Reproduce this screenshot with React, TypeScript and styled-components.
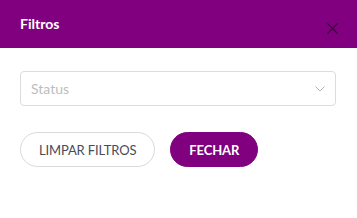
import styled, { createGlobalStyle } from 'styled-components';

const GlobalStyle = createGlobalStyle`
    body {
        margin: 0;
        background: #fff;
        font-family: Lato, "Open Sans", sans-serif;
    }
`;

const Modal = styled.div`
    width: 357px;
    height: 218px;
    background: #fff;
`;

const Header = styled.div`
    height: 48px;
    background: #800080;
    display: flex;
    align-items: flex-start;
    justify-content: space-between;
    padding: 0 19px 0 20px;
    box-sizing: border-box;
`;

const Titulo = styled.h5`
    margin: 15px 0 0;
    font-size: 14px;
    font-weight: 700;
    line-height: 17px;
    color: #fff;
`;

const BotonCerrar = styled.button`
    margin-top: 23px;
    padding: 0;
    border: none;
    background: none;
    opacity: 0.5;
    display: flex;
    cursor: pointer;
`;

const Body = styled.div`
    padding: 23px 21px 0 20px;
    display: flex;
    flex-direction: column;
    gap: 26px;
`;

const Select = styled.div`
    height: 35px;
    box-sizing: border-box;
    border: 1px solid #dcdcdc;
    border-radius: 4px;
    display: flex;
    align-items: center;
    justify-content: space-between;
    padding: 0 10px 0 10px;
`;

const Placeholder = styled.span`
    font-size: 14px;
    color: #bdbdbd;
`;

const Acciones = styled.div`
    display: flex;
    gap: 15px;
`;

const Boton = styled.button<{ $primario?: boolean }>`
    height: 35px;
    border-radius: 18px;
    padding: 0 18px;
    font-family: Lato, sans-serif;
    font-size: 13px;
    font-weight: ${(p) => (p.$primario ? 700 : 400)};
    color: ${(p) => (p.$primario ? '#fff' : '#4a4a5a')};
    background: ${(p) => (p.$primario ? '#800080' : '#fff')};
    border: 1px solid ${(p) => (p.$primario ? '#800080' : '#d9d9d9')};
    letter-spacing: -0.15px;
    cursor: pointer;
`;

export default function App() {
    return (
        <>
            <GlobalStyle />
            <Modal>
                <Header>
                    <Titulo>Filtros</Titulo>
                    <BotonCerrar aria-label="Fechar">
                        <svg width="11" height="11" viewBox="0 0 11 11">
                            <path d="M0.5 0.5 L10.5 10.5 M10.5 0.5 L0.5 10.5" stroke="#000" strokeWidth="1.2" fill="none" />
                        </svg>
                    </BotonCerrar>
                </Header>
                <Body>
                    <Select>
                        <Placeholder>Status</Placeholder>
                        <svg width="10" height="6" viewBox="0 0 10 6">
                            <path d="M0.5 0.5 L5 5 L9.5 0.5" stroke="#b5b5b5" strokeWidth="1" fill="none" />
                        </svg>
                    </Select>
                    <Acciones>
                        <Boton>LIMPAR FILTROS</Boton>
                        <Boton $primario>FECHAR</Boton>
                    </Acciones>
                </Body>
            </Modal>
        </>
    );
}
